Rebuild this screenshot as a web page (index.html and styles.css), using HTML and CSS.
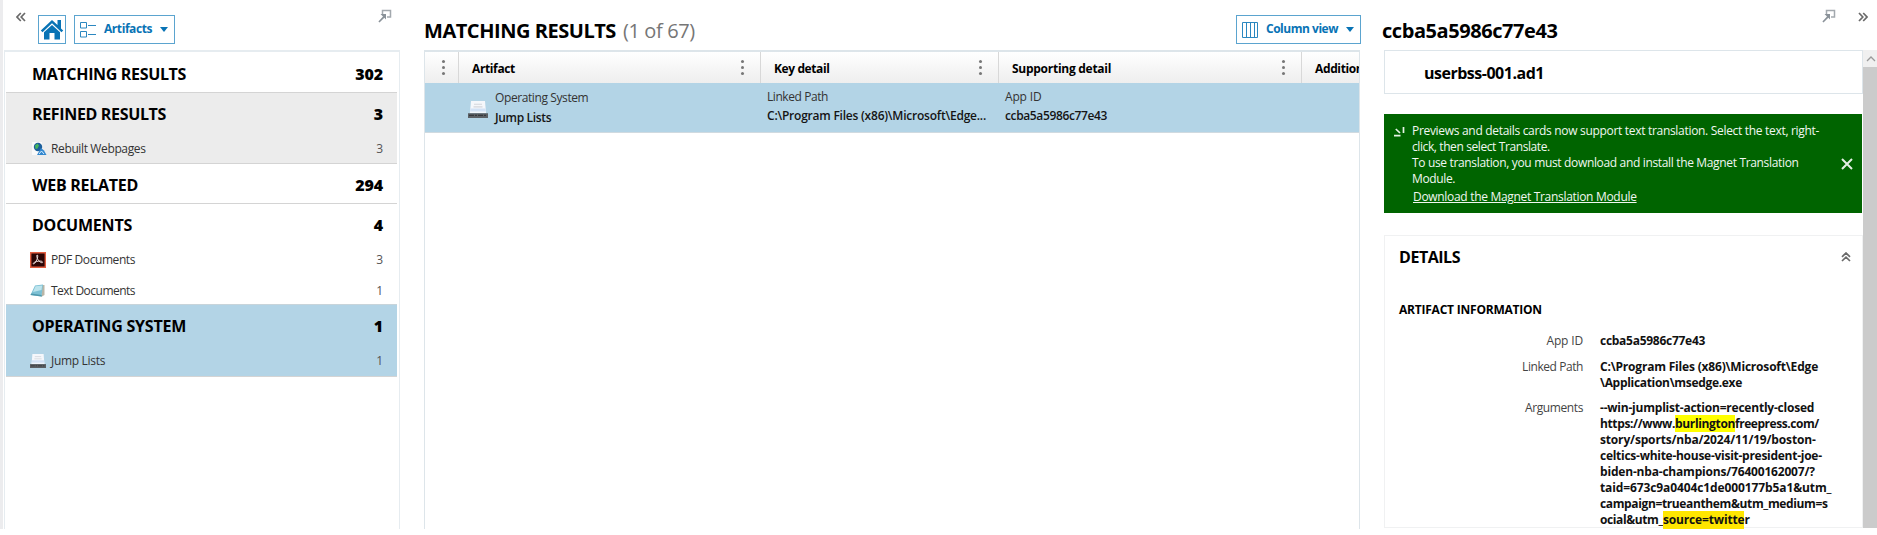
FILE: index.html
```
<!DOCTYPE html>
<html lang="en"><head><meta charset="utf-8"><title>Matching results</title><link rel="stylesheet" href="styles.css"></head>
<body>
<svg width="0" height="0" class="defs">
  <defs>
    <symbol id="popout" viewBox="0 0 14 14"><path d="M4.500 5V1.500h8v6.500H9" fill="none" stroke="#a3a9ae" stroke-width="1.500"/><path d="M2.500 5h5.500v5.500L6.300 8.800 1.500 13.500.4 12.400 5 7.500z" fill="#8a9299"/></symbol>
    <symbol id="chev" viewBox="0 0 10 10"><path d="M4.800 1 1 5l3.800 4M9 1 5.200 5 9 9" fill="none" stroke="#6a6a6a" stroke-width="1.700"/></symbol>
    <symbol id="drive" viewBox="0 0 20 16"><path d="M3 0h14l1 11H2z" fill="#f5f7fb"/><path d="M6 3h8M5.500 5.500h9" stroke="#d3d6dc"/><path d="M2.500 7h15l.5 4H2z" fill="#d2e2f6"/><path d="M2 10.500h16" stroke="#fff"/><path d="M0 11.500h20V16H0z" fill="#5b5f64"/><path d="M1 13.500h18" stroke="#35383c" stroke-dasharray="5 1 2 1"/></symbol>
  </defs>
</svg>
<div class="app">
  <aside class="nav">
    <div class="nav-bar">
      <svg class="nav-collapse" width="10" height="10"><use href="#chev"/></svg>
      <button class="btn home"><svg width="24" height="22" viewBox="0 0 24 22"><path d="M12 1 .8 11.500l1.700 1.700L12 4.300l9.500 8.900 1.700-1.700L21 9.400V1h-3.500v5z" fill="#0873b5"/><path d="M4 13.300 12 6l8 7.300V20.500h-5.500V14h-5v6.500H4z" fill="#0873b5"/></svg></button>
      <button class="btn artifacts"><svg width="16" height="16" viewBox="0 0 16 16" fill="none" stroke="#2b87c0"><path d="M.5.5h6v5.500h-6zM.5 9.500h6V15h-6zM8 3.500h8M8 12.500h8"/></svg><span class="t43">Artifacts</span><i class="caret"></i></button>
      <svg class="nav-pop" width="14" height="14"><use href="#popout"/></svg>
    </div>
    <div class="nav-list">
      <section class="group first"><h3><span class="t34">MATCHING RESULTS</span><b class="t16">302</b></h3></section>
      <section class="group grey"><h3><span class="t34">REFINED RESULTS</span><b>3</b></h3>
        <div class="item"><svg width="16" height="16" viewBox="0 0 16 16"><path d="M1 1h10v13H1z" fill="#fafafa"/><circle cx="7" cy="6" r="4.200" fill="#1d5f9b"/><path d="M4 4.500 6.500 2.500l1.500 2-1.500 3-2 .5z" fill="#47b65d"/><path d="m10 7 3 2.500L15.500 14H6z" fill="#3388cf"/><path d="m8 13 2.500-3 2.500 3" fill="none" stroke="#d7edff"/></svg><span class="t36">Rebuilt Webpages</span><em>3</em></div></section>
      <section class="group single"><h3><span class="t27">WEB RELATED</span><b class="t16">294</b></h3></section>
      <section class="group docs"><h3><span class="t22">DOCUMENTS</span><b>4</b></h3>
        <div class="item pdf"><svg width="16" height="16" viewBox="0 0 16 16"><path d="M.7.7h14.600v14.600H.7z" fill="#2b0505" stroke="#e35d40" stroke-width="1.400"/><path d="M7 3c1.500 0 .6 3.500-.8 6-1 1.900-2.300 3.500-2.900 2.800-.7-1.200 3.700-2.800 7-2.700 2.500 0 3 1.700 1.500 1.600C9.500 10.400 6 6 7 3z" fill="none" stroke="#f8e9e7" stroke-width=".9"/></svg><span class="t42">PDF Documents</span><em>3</em></div>
        <div class="item txt"><svg width="16" height="16" viewBox="0 0 16 16"><path d="M12 2h2.500v10L11 14z" fill="#b9b5a6"/><path d="M5 2.500 13 1.500 11.500 13.500.5 12z" fill="#7cc0d4"/><path d="m5.500 3.300 6.700-.9-.7 4.500L3 9z" fill="#bce4ed"/><path d="m.5 12 11 1.500.2-1.500-10.400-1.500z" fill="#4f98ad"/></svg><span class="t52">Text Documents</span><em>1</em></div></section>
      <section class="group blue"><h3><span class="t22">OPERATING SYSTEM</span><b>1</b></h3>
        <div class="item"><svg width="16" height="14" viewBox="0 0 20 16" preserveAspectRatio="none"><use href="#drive" width="20" height="16"/></svg><span class="t31">Jump Lists</span><em>1</em></div></section>
    </div>
  </aside>
  <main class="results">
    <div class="results-bar">
      <h1><span class="t46">MATCHING RESULTS</span><small class="t36">(1 of 67)</small></h1>
      <button class="btn colview"><svg width="16" height="16" viewBox="0 0 16 16" fill="none" stroke="#2b87c0"><path d="M.5.5h15v15H.5zM4.500.5v15M8.500.5v15M12.500.5v15"/></svg><span class="t48">Column view</span><i class="caret"></i></button>
    </div>
    <div class="table">
      <div class="row head">
        <div class="th c0"><i class="dots"></i></div>
        <div class="th c1"><span class="t36">Artifact</span><i class="dots"></i></div>
        <div class="th c2"><span class="t39">Key detail</span><i class="dots"></i></div>
        <div class="th c3"><span class="t27">Supporting detail</span><i class="dots"></i></div>
        <div class="th c4"><span class="t36">Additional detail</span></div>
      </div>
      <div class="row data">
        <div class="c0"></div>
        <div class="td c1"><svg width="20" height="17" viewBox="0 0 20 16" preserveAspectRatio="none"><use href="#drive" width="20" height="16"/></svg><div class="pair low"><span class="t39">Operating System</span><strong class="t34">Jump Lists</strong></div></div>
        <div class="td c2"><div class="pair"><span class="t43">Linked Path</span><strong class="t22">C:\Program Files (x86)\Microsoft\Edge...</strong></div></div>
        <div class="td c3"><div class="pair"><span class="t16">App ID</span><strong class="t36">ccba5a5986c77e43</strong></div></div>
        <div class="c4"></div>
      </div>
    </div>
  </main>
  <aside class="detail">
    <div class="detail-bar"><h2 class="t43">ccba5a5986c77e43</h2><svg class="d-pop" width="14" height="14"><use href="#popout"/></svg><svg class="flip" width="10" height="10"><use href="#chev"/></svg></div>
    <div class="detail-body">
      <div class="cards">
        <div class="source"><span class="t49">userbss-001.ad1</span></div>
        <div class="notice">
          <svg class="info" width="11" height="11" viewBox="0 0 11 11" fill="none" stroke="#e6f2e6" stroke-width="1.700"><path d="M0 9.700h6.500M1.800 3l4.200 4M9.500 1v6"/></svg>
          <div class="notice-text">
            <span class="t31">Previews and details cards now support text translation. Select the text, right-</span>
            <span class="t39">click, then select Translate.</span>
            <span class="t34">To use translation, you must download and install the Magnet Translation</span>
            <span class="t36">Module.</span>
            <a class="t31">Download the Magnet Translation Module</a>
          </div>
          <svg class="close" width="12" height="12" viewBox="0 0 12 12" stroke="#e3efe3" stroke-width="2"><path d="m1 1 10 10M11 1 1 11"/></svg>
        </div>
        <div class="card">
          <div class="card-head"><h3 class="t46">DETAILS</h3><svg class="up" width="10" height="10"><use href="#chev"/></svg></div>
          <h4 class="t22">ARTIFACT INFORMATION</h4>
          <dl>
            <dt class="t16">App ID</dt><dd><span class="t27">ccba5a5986c77e43</span></dd>
            <dt class="t43">Linked Path</dt><dd><span class="t19">C:\Program Files (x86)\Microsoft\Edge</span><br><span class="t31">\Application\msedge.exe</span></dd>
            <dt class="t39">Arguments</dt><dd><span class="t22">--win-jumplist-action=recently-closed</span><br><span class="t36">https://www.</span><mark class="t34">burlington</mark><span class="t46">freepress.com/</span><br><span class="t16">story/sports/nba/2024/11/19/boston-</span><br><span class="t27">celtics-white-house-visit-president-joe-</span><br><span class="t19">biden-nba-champions/76400162007/?</span><br><span class="t11">taid=673c9a0404c1de000177b5a1&amp;utm_</span><br><span class="t36">campaign=trueanthem&amp;utm_medium=s</span><br><span class="t39">ocial&amp;utm_</span><mark class="amber t16">source=twitte</mark>r</dd>
          </dl>
        </div>
      </div>
      <div class="scroll"><svg width="14" height="17" viewBox="0 0 14 17"><path d="m4 11 4-4 4 4" fill="none" stroke="#9a9a9a" stroke-width="1.300"/></svg><div class="thumb"></div></div>
    </div>
  </aside>
</div>
</body></html>
```
FILE: styles.css
```
* { box-sizing: border-box; }
body { margin: 0; background: #fff; color: #000; font: 12px/16px "Open Sans", "Noto Sans", sans-serif; overflow: hidden; }
h1, h2, h3, h4, dl, dd { margin: 0; }
svg { display: block; flex: none; }
.defs { position: absolute; }
.app { display: flex; height: 529px; border-left: 3px solid #ececee; }

/* letter tracking steps */
.t11 { letter-spacing: -.11px; }
.t16 { letter-spacing: -.16px; }
.t19 { letter-spacing: -.19px; }
.t22 { letter-spacing: -.22px; }
.t27 { letter-spacing: -.27px; }
.t31 { letter-spacing: -.31px; }
.t34 { letter-spacing: -.34px; }
.t36 { letter-spacing: -.37px; }
.t39 { letter-spacing: -.4px; }
.t42 { letter-spacing: -.42px; }
.t43 { letter-spacing: -.43px; }
.t46 { letter-spacing: -.46px; }
.t48 { letter-spacing: -.48px; }
.t49 { letter-spacing: -.49px; }
.t52 { letter-spacing: -.52px; }

.btn { display: flex; align-items: center; height: 29px; padding: 0; border: 1px solid #5ba4cf; background: #fff; color: #0873b5; font: 700 12px/16px "Open Sans", sans-serif; white-space: nowrap; }
.btn span { margin-top: -2px; }
.caret { width: 0; height: 0; border: 4.500px solid transparent; border-top: 5px solid #0873b5; border-bottom: 0; }

/* navigation */
.nav { width: 397px; flex: none; display: flex; flex-direction: column; }
.nav-bar { display: flex; align-items: flex-start; height: 50px; padding: 0 8px 0 13px; }
.nav-collapse { margin-top: 12px; }
.home { width: 28px; margin: 15px 8px 0 12px; justify-content: center; }
.artifacts { width: 101px; margin-top: 15px; padding-left: 5px; }
.artifacts span { margin-left: 8px; width: 56px; text-align: left; }
.nav-pop { margin: 9px 0 0 auto; }
.nav-list { flex: 1; border: solid #e6ecf0; border-width: 2px 1px 0 1px; margin-left: 1px; padding: 0 2px 0 1px; }
.group { border-bottom: 1px solid #d4d4d4; padding: 0 14px 0 26px; }
.group h3 { display: flex; justify-content: space-between; font-size: 16px; line-height: 22px; padding-top: 11px; height: 40px; }
.item { display: flex; align-items: center; height: 31px; color: #333; }
.item svg { margin-right: 5px; }
.item em { margin-left: auto; font-style: normal; color: #555; }
.first { height: 41px; }
.grey { height: 71px; background: #ececec; }
.single { height: 40px; }
.docs { height: 101px; border-color: #c8d4da; }
.blue { height: 72px; background: #b3d4e6; }
.grey h3, .docs h3, .blue h3, .single h3 { padding-top: 10px; }
.pdf, .docs .item, .blue .item { margin-left: -2px; }
.grey .item { margin-left: -1px; }
.grey .item svg { margin-right: 4px; }

/* results */
.results { width: 959px; flex: none; padding-left: 24px; display: flex; flex-direction: column; }
.results-bar { display: flex; justify-content: space-between; align-items: flex-start; height: 50px; width: 937px; }
h1 { font-size: 20px; line-height: 28px; margin-top: 17px; white-space: nowrap; }
h1 small { font-size: 20px; font-weight: 400; color: #767676; margin-left: 7px; }
.colview { width: 125px; margin-top: 15px; padding-left: 5px; }
.colview span { margin-left: 8px; width: 80px; text-align: left; }
.table { flex: 1; width: 936px; border: solid #dde5ea; border-width: 2px 1px 0; }
.row { display: flex; overflow: hidden; }
.row > div { flex: none; }
.head { height: 31px; background: linear-gradient(#fff, #eee); font-weight: 700; }
.th { display: flex; align-items: center; justify-content: space-between; border-right: 1px solid #d8d8d8; padding: 2px 16px 0 13px; white-space: nowrap; }
.c0 { width: 34px; }
.c1 { width: 302px; }
.c2 { width: 238px; }
.c3 { width: 303px; }
.c4 { width: 140px; }
.th.c0 { padding-right: 13px; }
.dots { width: 3px; height: 3px; border-radius: 50%; background: #777; box-shadow: 0 -6px #777, 0 6px #777; margin: -3px 0 0 auto; }
.data { height: 50px; background: #b3d4e6; border-bottom: 1px solid #d0dae0; }
.td { display: flex; padding-left: 6px; white-space: nowrap; }
.td.c1 { padding-left: 9px; }
.td svg { margin: 18px 7px 0 0; }
.pair { display: flex; flex-direction: column; padding-top: 4px; line-height: 19px; color: #333; }
.pair.low { padding-top: 5px; line-height: 20px; }
.pair strong { font-weight: 600; color: #151515; }

/* detail pane */
.detail { flex: 1; padding-left: 24px; }
.detail-bar { display: flex; align-items: flex-start; height: 50px; padding-right: 9px; }
h2 { font-size: 20px; line-height: 28px; margin: 17px auto 0 -1px; }
.d-pop { margin: 9px 22px 0 0; }
.flip { margin-top: 12px; transform: scaleX(-1); }
.detail-body { display: flex; height: 478px; }
.cards { width: 479px; margin-left: 1px; }
.source { height: 44px; border: 1px solid #dde5ea; padding: 11px 0 0 39px; font: 700 16px/22px "Open Sans", sans-serif; }
.notice { display: flex; height: 99px; margin: 20px 1px 22px 0; padding-left: 10px; background: #006400; color: #f1f7f1; }
.info { margin: 12px 7px 0 0; }
.notice-text { display: flex; flex-direction: column; width: 429px; padding-top: 9px; white-space: nowrap; }
.notice-text a { margin: 2px 0 0 1px; text-decoration: underline; align-self: flex-start; }
.close { margin-top: 44px; }
.card { height: 293px; border: 1px solid #f0f1f2; padding: 0 11px 0 14px; }
.card-head { display: flex; justify-content: space-between; }
.card h3 { font-size: 16px; line-height: 22px; margin-top: 10px; }
.up { margin-top: 16px; transform: rotate(90deg); }
h4 { font-size: 12px; padding-top: 34px; }
dl { display: grid; grid-template-columns: 184px 1fr; column-gap: 17px; row-gap: 9.500px; margin-top: 15px; }
dt { text-align: right; color: #444; }
dd { font-weight: 700; color: #111; white-space: nowrap; }
mark { background: #ff0; color: inherit; }
.amber { background: #ffe600; padding-bottom: 7px; }
.scroll { width: 14px; background: #f0f0f0; }
.thumb { height: 461px; background: #cbcbcb; }
```
